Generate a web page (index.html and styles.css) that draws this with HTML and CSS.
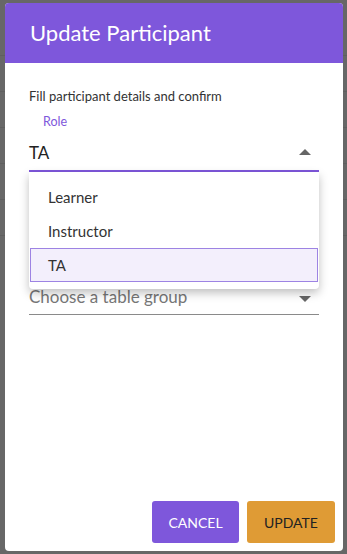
FILE: index.html
```html
<!DOCTYPE html>
<html lang="en">
<head>
    <meta charset="UTF-8">
    <meta name="viewport" content="width=device-width, initial-scale=1.0">
    <title>Update Participant</title>
    <link rel="stylesheet" href="styles.css">
</head>
<body>
    <div class="backdrop">
        <div class="ghost-lines">
            <div></div><div></div><div></div><div></div><div></div><div></div>
        </div>
    </div>
    <div class="dialog">
        <div class="dialog-header">Update Participant</div>
        <div class="dialog-body">
            <p class="intro">Fill participant details and confirm</p>
            <div class="field field-active">
                <label class="field-label">Role</label>
                <div class="field-input">
                    <span class="value">TA</span>
                    <span class="arrow arrow-up"></span>
                </div>
                <ul class="menu">
                    <li class="menu-item">Learner</li>
                    <li class="menu-item">Instructor</li>
                    <li class="menu-item selected">TA</li>
                </ul>
            </div>
            <div class="field field-plain">
                <div class="field-input">
                    <span class="placeholder">Choose a table group</span>
                    <span class="arrow arrow-down"></span>
                </div>
            </div>
        </div>
        <div class="dialog-actions">
            <button class="btn btn-cancel">CANCEL</button>
            <button class="btn btn-update">UPDATE</button>
        </div>
    </div>
</body>
</html>
```

FILE: styles.css
```css
body {
    margin: 0;
    height: 554px;
    background-color: #676767;
    font-family: Lato, "Open Sans", sans-serif;
    overflow: hidden;
}
.backdrop {
    position: absolute;
    left: 0;
    top: 0;
    width: 347px;
    height: 554px;
}
.ghost-lines div {
    height: 35px;
    border-bottom: 1px solid #5f5f5f;
}
.ghost-lines div:first-child {
    height: 55px;
}
.dialog {
    position: absolute;
    left: 5px;
    top: 3px;
    width: 338px;
    height: 548px;
    background: #fff;
    border-radius: 4px;
    display: flex;
    flex-direction: column;
}
.dialog-header {
    height: 60px;
    background-color: #7e57db;
    color: #fff;
    font-size: 22px;
    line-height: 60px;
    padding-left: 25px;
    border-radius: 4px 4px 0 0;
}
.dialog-body {
    padding: 0 24px;
    flex: 1;
}
.intro {
    margin: 25px 0 0;
    font-size: 13px;
    line-height: 16px;
    color: #333;
}
.field {
    position: relative;
}
.field-active {
    margin-top: 10px;
}
.field-label {
    display: block;
    margin-left: 14px;
    font-size: 12.5px;
    line-height: 16px;
    color: #7e57db;
}
.field-input {
    display: flex;
    align-items: center;
    justify-content: space-between;
    height: 36px;
    margin-top: 4px;
    border-bottom: 1px solid #8a8a8a;
}
.field-active .field-input {
    border-bottom: 2px solid #7e57db;
}
.value {
    font-size: 17px;
    color: #222;
}
.placeholder {
    font-size: 17px;
    color: #777;
}
.arrow {
    width: 0;
    height: 0;
    margin-right: 8px;
    border-left: 6px solid transparent;
    border-right: 6px solid transparent;
}
.arrow-up {
    border-bottom: 6px solid #666;
}
.arrow-down {
    border-top: 6px solid #666;
    margin-top: 6px;
}
.field-plain {
    margin-top: 106px;
}
.menu {
    position: absolute;
    left: 0;
    right: 0;
    top: 58px;
    margin: 0;
    padding: 8px 1px 7px;
    list-style: none;
    background: #fff;
    border-radius: 0 0 4px 4px;
    box-shadow: 0 4px 10px rgba(0, 0, 0, 0.25);
    z-index: 2;
}
.menu-item {
    height: 32px;
    line-height: 32px;
    padding-left: 17px;
    font-size: 15px;
    color: #333;
    border: 1px solid transparent;
}
.menu-item.selected {
    background: #f3effc;
    border-color: #9d83e3;
}
.dialog-actions {
    display: flex;
    justify-content: flex-end;
    gap: 8px;
    padding: 0 8px 8px 0;
}
.btn {
    height: 42px;
    border: none;
    border-radius: 3px;
    font-family: Lato, "Open Sans", sans-serif;
    font-size: 14px;
    padding: 0;
    cursor: pointer;
}
.btn-cancel {
    width: 87px;
    background-color: #7e57db;
    color: #fff;
}
.btn-update {
    width: 88px;
    background-color: #df9b35;
    color: #222;
}
```
